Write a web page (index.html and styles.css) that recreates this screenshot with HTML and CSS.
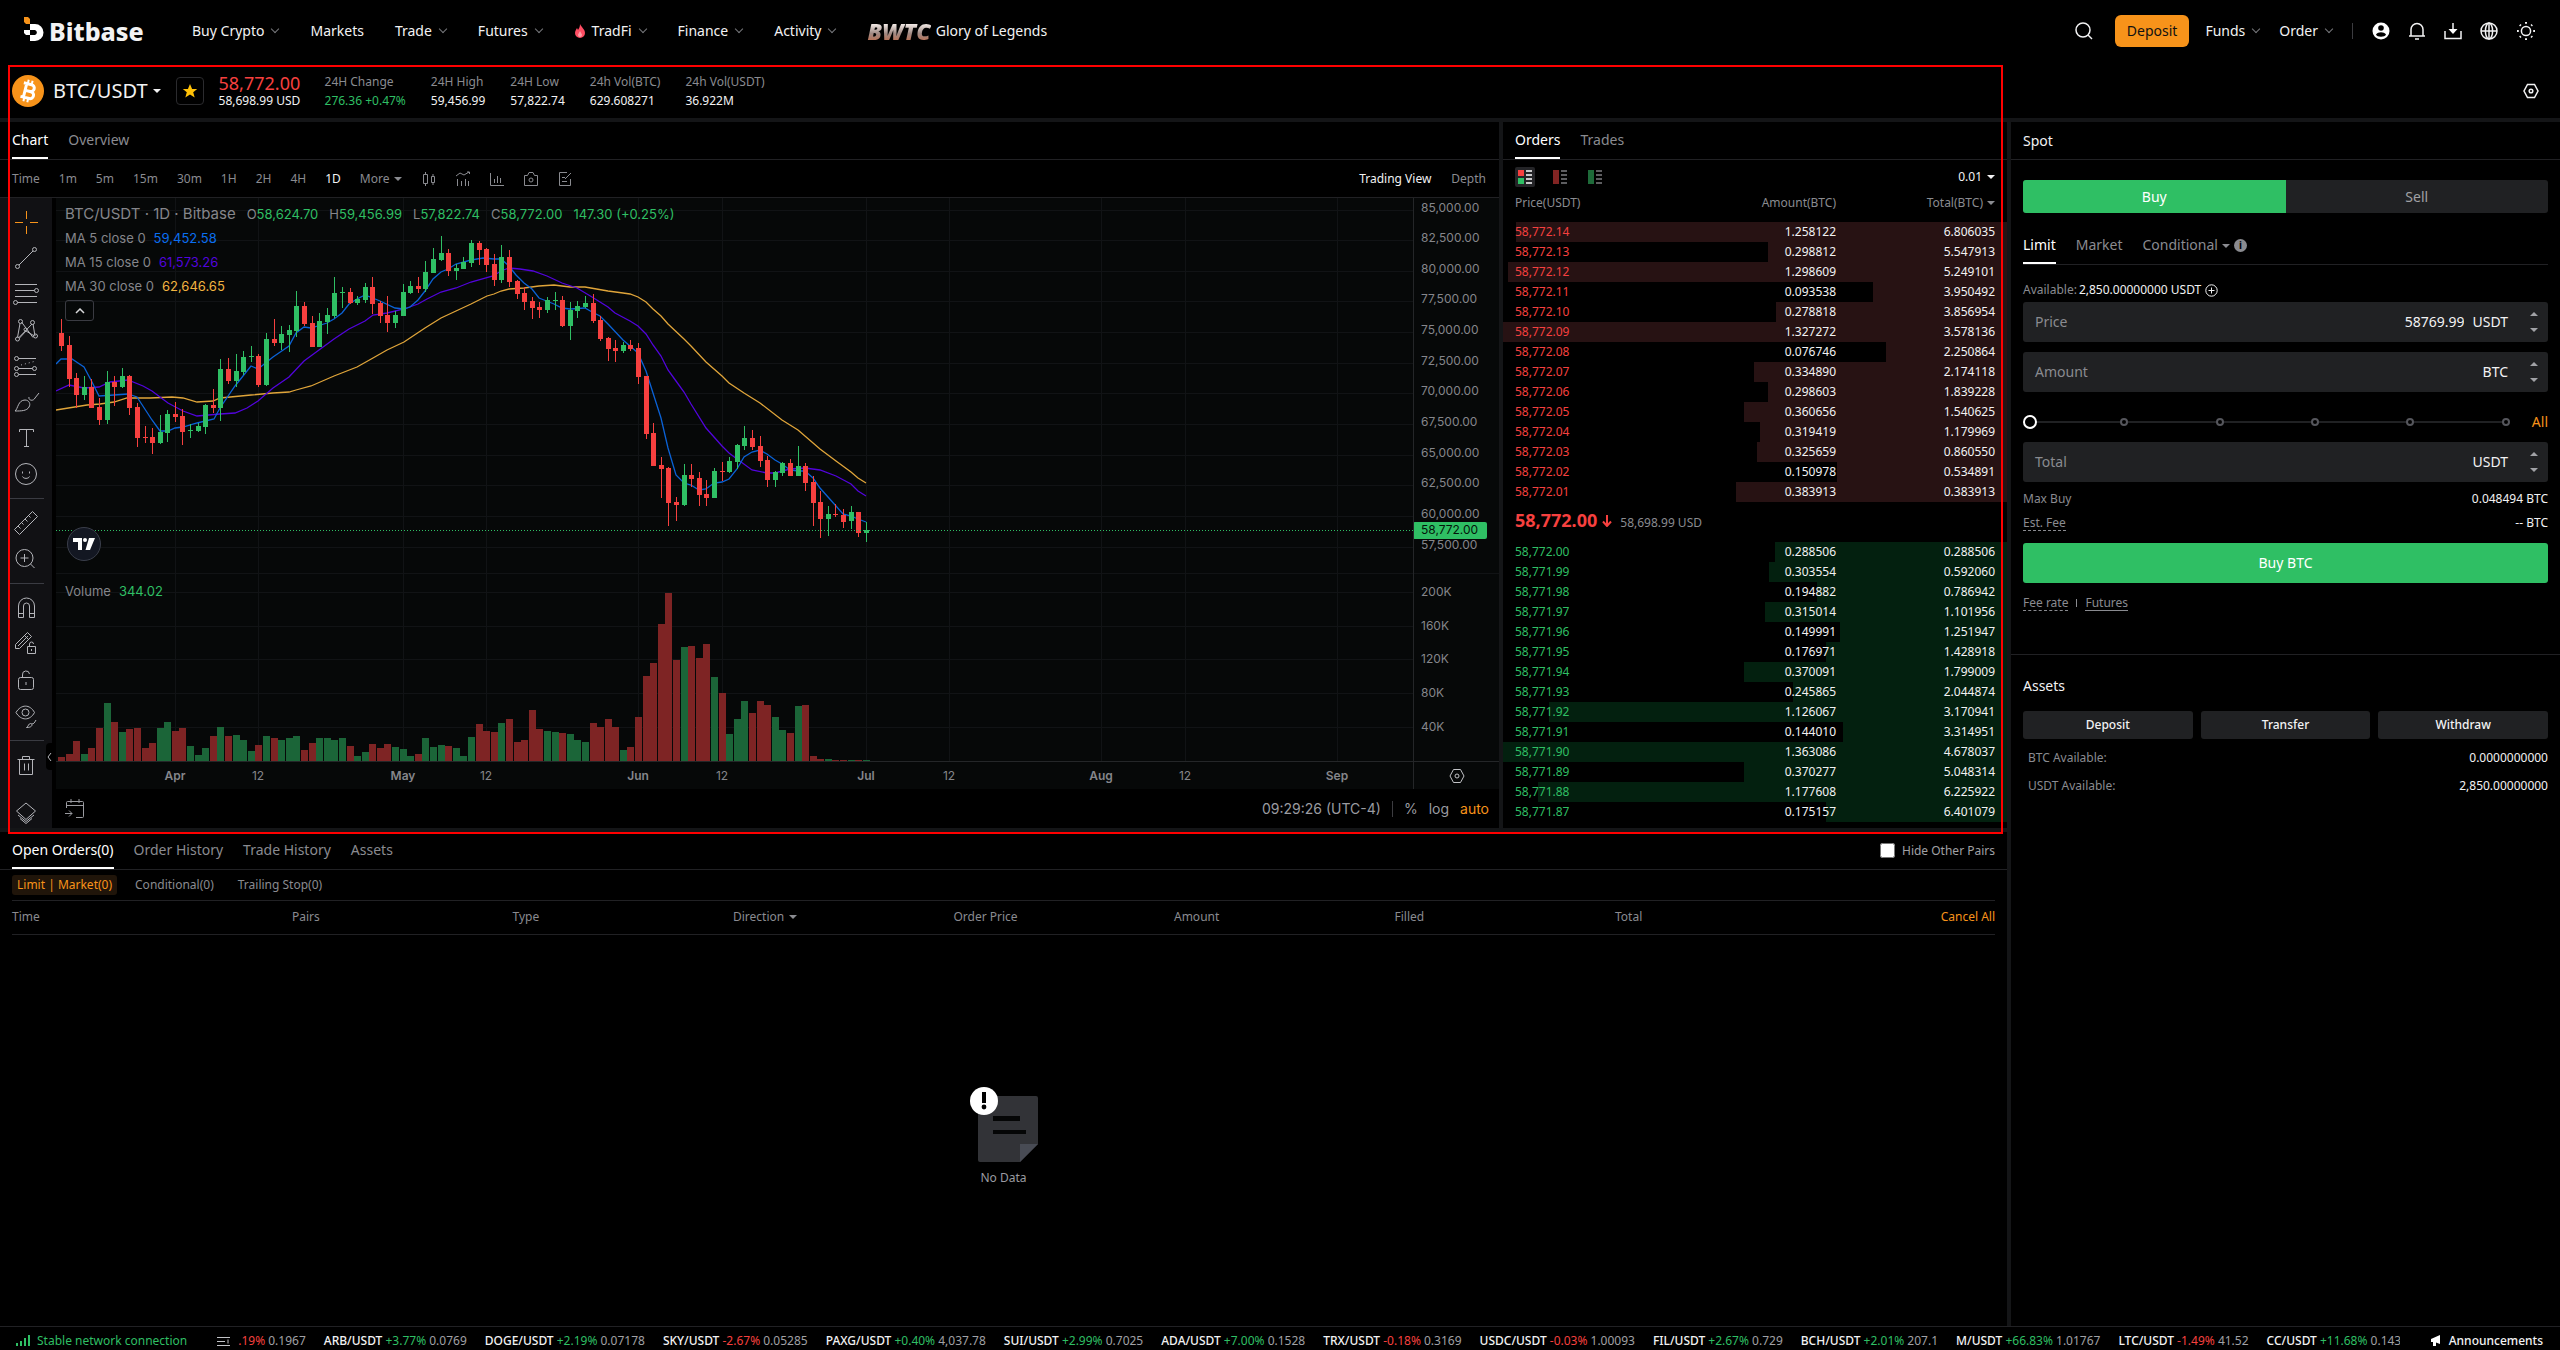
FILE: index.html
```html
<!DOCTYPE html>
<html lang="en">
<head>
<meta charset="utf-8">
<title>BTC/USDT | Bitbase</title>
<link rel="stylesheet" href="styles.css">
</head>
<body>
<header class="topbar">
  <a class="brand" href="#">
    <svg width="20" height="24" viewBox="0 0 20 24"><path d="M0 0h4l2 2v5H2L0 5z" fill="#f7931a"/><path d="M6 7h5a8.500 8.500 0 0 1 0 17H6v-6h5a2.600 2.600 0 0 0 0-5H6z" fill="#fff"/><path d="M0 13h6v5H2l-2-2z" fill="#fff"/></svg>
    <span>Bitbase</span>
  </a>
  <nav class="nav">
    <a href="#">Buy Crypto <i class="chev"></i></a>
    <a href="#">Markets</a>
    <a href="#">Trade <i class="chev"></i></a>
    <a href="#">Futures <i class="chev"></i></a>
    <a href="#"><svg width="12" height="14" viewBox="0 0 12 14"><path d="M6 0c1 3 5 5 5 9a5 5 0 0 1-10 0c0-2 1-3 2-5l1 2c1-2 2-3 2-6z" fill="#ff4d63"/><path d="M6 7c1 2 2 3 2 4a2 2 0 0 1-4 0c0-1 1-2 2-4z" fill="#ff9aa5"/></svg>TradFi <i class="chev"></i></a>
    <a href="#">Finance <i class="chev"></i></a>
    <a href="#">Activity <i class="chev"></i></a>
    <a href="#" class="event"><b class="bwtc">BWTC</b>Glory of Legends</a>
  </nav>
  <div class="tools">
    <button class="icon search" aria-label="Search"><svg width="18" height="18" viewBox="0 0 18 18"><circle cx="8" cy="8" r="7"/><path d="M13 13l4 4"/></svg></button>
    <button class="deposit">Deposit</button>
    <a href="#">Funds <i class="chev"></i></a>
    <a href="#">Order <i class="chev"></i></a>
    <span class="bar"></span>
    <div class="icons">
      <button class="icon" aria-label="Account"><svg width="18" height="18" viewBox="0 0 18 18"><circle cx="9" cy="9" r="8.500" fill="#fff" stroke="none"/><circle cx="9" cy="6" r="2.800" fill="#000" stroke="none"/><path d="M4 12.500c2-3 8-3 10 0-1 3-9 3-10 0z" fill="#000" stroke="none"/></svg></button>
      <button class="icon" aria-label="Notifications"><svg width="18" height="18" viewBox="0 0 18 18"><path d="M3 14V7.500a6 6 0 0 1 12 0V14M1 14h16M7 17h4"/></svg></button>
      <button class="icon" aria-label="Download"><svg width="18" height="18" viewBox="0 0 18 18"><path d="M1 9v7.500h16V9M9 1v7"/><path d="M4.500 7h9L9 12z" fill="#fff" stroke="none"/></svg></button>
      <button class="icon" aria-label="Language"><svg width="18" height="18" viewBox="0 0 18 18"><circle cx="9" cy="9" r="8"/><ellipse cx="9" cy="9" rx="3.600" ry="8"/><path d="M1 9h16M9 1v16"/></svg></button>
      <button class="icon" aria-label="Theme"><svg width="20" height="20" viewBox="0 0 20 20"><circle cx="10" cy="10" r="4.600"/><path d="M10 1v1.800M10 17.200V19M1 10h1.800M17.200 10H19M3.800 3.800l1 1M15.200 15.200l1 1M3.800 16.200l1-1M15.200 4.800l1-1" stroke-width="2"/></svg></button>
    </div>
  </div>
</header>

<section class="pairbar">
  <svg width="32" height="32" viewBox="0 0 32 32"><circle cx="16" cy="16" r="16" fill="#f7931a"/><g transform="rotate(14 16 16)" fill="none" stroke="#fff"><path d="M10 9h8a3.300 3.300 0 0 1 0 7h-5.500M12.500 16H19a3.500 3.500 0 0 1 0 7h-9M13 8.500V23.500" stroke-width="3"/><path d="M14 5v4M18 5v4M14 23v4M18 23v4" stroke-width="2"/></g></svg>
  <button class="pair">BTC/USDT<i class="caret"></i></button>
  <button class="fav" aria-label="Favourite"><svg width="16" height="16" viewBox="0 0 16 16"><path d="M8 1l2.100 5H15.200l-4 3.300 1.500 5.200L8 11.400l-4.700 3.100 1.500-5.200-4-3.300h5.100z" fill="#ffc107"/></svg></button>
  <div class="last"><strong>58,772.00</strong><span>58,698.99 USD</span></div>
  <dl class="stats">
    <div><dt>24H Change</dt><dd class="up">276.36 +0.47%</dd></div>
    <div><dt>24H High</dt><dd>59,456.99</dd></div>
    <div><dt>24H Low</dt><dd>57,822.74</dd></div>
    <div><dt>24h Vol(BTC)</dt><dd>629.608271</dd></div>
    <div><dt>24h Vol(USDT)</dt><dd>36.922M</dd></div>
  </dl>
  <button class="icon settings" aria-label="Settings"><svg width="16" height="16" viewBox="0 0 16 16" stroke-width="1.300"><path d="M4.500 1.500h7L15 8l-3.500 6.500h-7L1 8z"/><circle cx="8" cy="8" r="1.800"/></svg></button>
</section>

<main class="desk">
  <section class="panel chart">
    <div class="tabs"><button class="tab on">Chart</button><button class="tab">Overview</button></div>
    <div class="intervals">
      <span>Time</span><button>1m</button><button>5m</button><button>15m</button><button>30m</button><button>1H</button><button>2H</button><button>4H</button><button class="on">1D</button><button>More<i class="caret"></i></button>
      <div class="charticons">
        <button aria-label="Chart type"><svg width="16" height="16" viewBox="0 0 16 16"><path d="M2.500 3.500h4v9h-4zM4.500 1v2.500M4.500 12.500V15M10.500 5.500h3v6h-3zM12 3v2.500M12 11.500V14"/></svg></button>
        <button aria-label="Indicators"><svg width="16" height="16" viewBox="0 0 16 16"><path d="M1 5l4-3 4 2 5-3M12 1h2.500v2M2.500 8v7M6.500 10v5M10.500 8v7M13.500 10v5"/></svg></button>
        <button aria-label="Statistics"><svg width="16" height="16" viewBox="0 0 16 16"><path d="M1.500 2v12.500H15M5.500 8v4M8.500 5v7M11.500 7v5"/></svg></button>
        <button aria-label="Screenshot"><svg width="16" height="16" viewBox="0 0 16 16"><path d="M1.500 4.500h3l1.500-3h4l1.500 3h3v10h-13z"/><circle cx="8" cy="9" r="2"/></svg></button>
        <button aria-label="Notes"><svg width="16" height="16" viewBox="0 0 16 16"><path d="M10 1.500H2.500v13h11V8M5 6.500h3M5 10.500h5M8 8l6-6"/></svg></button>
      </div>
      <div class="views"><button class="on">Trading View</button><button>Depth</button></div>
    </div>
    <div class="tv">
      <div class="drawbar">
        <button class="on" aria-label="Cross"><svg viewBox="0 0 28 28"><path d="M3 14.500h8M18 14.500h8M14.500 3v8M14.500 18v8"/></svg></button>
        <button aria-label="Trend line"><svg viewBox="0 0 28 28"><path d="M7 21L21 7"/><circle cx="5.500" cy="22.500" r="2"/><circle cx="22.500" cy="5.500" r="2"/></svg></button>
        <button aria-label="Fib retracement"><svg viewBox="0 0 28 28"><path d="M3 4.500h22M3 10.500h19.500M3 16.500h22M5.500 22.500H25"/><circle cx="24.500" cy="10.500" r="2"/><circle cx="3.500" cy="22.500" r="2"/></svg></button>
        <button aria-label="Patterns"><svg viewBox="0 0 28 28"><path d="M5.500 21.500L8 7.500M9.500 6l11.500 15.500M7 21.500L20 8M21 8l2 12M7.500 22L14 15l7.500 4.500"/><circle cx="5.500" cy="23" r="2"/><circle cx="8.500" cy="5.500" r="2"/><circle cx="20.500" cy="6.500" r="2"/><circle cx="23.500" cy="20" r="2"/><circle cx="13.500" cy="13.500" r="1.500"/></svg></button>
        <button aria-label="Prediction"><svg viewBox="0 0 28 28"><path d="M6.500 6.500H24M6.500 16.500h14M6.500 22.500H24"/><path d="M9 13l15-4" stroke-dasharray="1 3"/><circle cx="4.500" cy="6.500" r="2"/><circle cx="4.500" cy="16.500" r="2"/><circle cx="22.500" cy="16.500" r="2"/><circle cx="4.500" cy="22.500" r="2"/></svg></button>
        <button aria-label="Brush"><svg viewBox="0 0 28 28"><path d="M3 23c3-2 3-11 10-11 4 0 6 4 4 7-2 4-8 4-14 4zM17 9c-1 3 4 5 6 1l4-5"/></svg></button>
        <button aria-label="Text"><svg viewBox="0 0 28 28"><path d="M7.500 8V5.500h14V8M14.500 5.500v17M12 22.500h5"/></svg></button>
        <button aria-label="Emoji"><svg viewBox="0 0 28 28"><circle cx="14" cy="14" r="10.500"/><path d="M10.500 11.500v2M17.500 11.500v2M10.500 16.500c1 2.500 6 2.500 7 0"/></svg></button>
        <hr>
        <button aria-label="Measure"><svg viewBox="0 0 28 28"><path d="M2.500 20.500l18-18 5 5-18 18zM6 17l2.500 2.500M9.500 13.500l2 2M13 10l2.500 2.500M16.500 6.500l2 2"/></svg></button>
        <button aria-label="Zoom in"><svg viewBox="0 0 28 28"><circle cx="12.500" cy="13" r="8.500"/><path d="M12.500 9v8M8.500 13h8M18.500 19l4 4"/></svg></button>
        <hr>
        <button aria-label="Magnet"><svg viewBox="0 0 28 28"><path d="M6.500 23.500V12a8 8 0 0 1 16 0v11.500h-5V12a3 3 0 0 0-6 0v11.500zM6.500 19.500h5M17.500 19.500h5"/></svg></button>
        <button aria-label="Stay in drawing mode"><svg viewBox="0 0 28 28"><path d="M3.500 18.500v-4L15.500 2.500l4 4-12 12zM12.500 5.500l4 4M6 16L16 6M15.500 16.500h8v7h-8zM17.500 16.500V14a2 2 0 0 1 4 0M19.500 19v2"/></svg></button>
        <button aria-label="Lock drawings"><svg viewBox="0 0 28 28"><rect x="6.500" y="11.500" width="15" height="12" rx="2"/><path d="M10.500 11.500V9a3.500 3.500 0 0 1 7-1M14 16v3" /></svg></button>
        <button aria-label="Hide drawings"><svg viewBox="0 0 28 28"><path d="M4 10.500c5-8.500 14-8.500 18.500 0-4.500 8.500-13.500 8.500-18.500 0z"/><circle cx="13.500" cy="10.500" r="3.500"/><path d="M14.500 25.500c2-1 2-4 4-4s3 4-4 4zM20 21c0 2 2 1 4-3"/></svg></button>
        <hr>
        <button aria-label="Remove"><svg viewBox="0 0 28 28"><path d="M5.500 8.500h17M10.500 8.500v-3h7v3M7.500 8.500v15h13v-15M12.500 12.500v7M16.500 12.500v7"/></svg></button>
        <button class="layers" aria-label="Object tree"><svg viewBox="0 0 28 28"><path d="M14 4l9.500 8L14 20.500 4.500 12zM6 16l8 6.500 8-6.500M8 19.500l6 5 6-5"/></svg></button>
        <button class="fold" aria-label="Hide toolbar"><svg viewBox="0 0 6 12"><path d="M5 2L2 6l3 4"/></svg></button>
      </div>
      <div class="tvmain">
        <div class="plot">
          <svg class="pane" id="pane" role="img" aria-label="BTC/USDT daily candles"></svg>
          <svg class="axis" id="axis" role="img" aria-label="Price scale"></svg>
          <div class="legend">
            <p class="title"><span>BTC/USDT · 1D · Bitbase</span><small>O<b>58,624.70</b></small><small>H<b>59,456.99</b></small><small>L<b>57,822.74</b></small><small>C<b>58,772.00</b></small><small><b>147.30 (+0.25%)</b></small></p>
            <p>MA 5 close 0<b class="ma5">59,452.58</b></p>
            <p>MA 15 close 0<b class="ma15">61,573.26</b></p>
            <p>MA 30 close 0<b class="ma30">62,646.65</b></p>
            <button aria-label="Collapse legend"><svg width="10" height="6" viewBox="0 0 10 6"><path d="M1 5l4-4 4 4"/></svg></button>
          </div>
          <a class="tvlogo" href="#" aria-label="TradingView"><svg width="22" height="12" viewBox="0 0 22 12"><path d="M0 0h9v12H5V4H0zM16 0h6l-5 12h-4.500z"/><circle cx="12" cy="2" r="2"/></svg></a>
          <p class="legend vol">Volume<b>344.02</b></p>
        </div>
        <div class="times">
          <svg id="times" role="img" aria-label="Time scale"></svg>
          <button aria-label="Scale settings"><svg width="16" height="16" viewBox="0 0 16 16"><path d="M4.500 1.500h7L15 8l-3.500 6.500h-7L1 8z"/><circle cx="8" cy="8" r="2"/></svg></button>
        </div>
        <div class="tvfoot">
          <button aria-label="Go to date"><svg width="20" height="20" viewBox="0 0 20 20"><path d="M1.500 9V3.500a1 1 0 0 1 1-1h15a1 1 0 0 1 1 1v14a1 1 0 0 1-1 1H11M1.500 6.500h17M6 0v4M14 0v4M0 14.500h7M4 11.500l3 3-3 3"/></svg></button>
          <span class="clock">09:29:26 (UTC-4)</span><span class="bar"></span>
          <button>%</button><button>log</button><button class="on">auto</button>
        </div>
      </div>
    </div>
  </section>

  <section class="panel book">
    <div class="tabs"><button class="tab on">Orders</button><button class="tab">Trades</button></div>
    <div class="modes">
      <button class="on" aria-label="Both sides"><svg width="14" height="14" viewBox="0 0 14 14"><path d="M0 0h6v6H0z" fill="#f6403f"/><path d="M0 8h6v6H0z" fill="#2fbf64"/><path d="M8 1h6M8 5h6M8 9h6M8 13h6" stroke="#c8c8ca" stroke-width="2"/></svg></button>
      <button aria-label="Asks only"><svg width="14" height="14" viewBox="0 0 14 14"><path d="M0 0h6v14H0z" fill="#822423"/><path d="M8 1h6M8 5h6M8 9h6M8 13h6" stroke="#5d5d60" stroke-width="2"/></svg></button>
      <button aria-label="Bids only"><svg width="14" height="14" viewBox="0 0 14 14"><path d="M0 0h6v14H0z" fill="#1e6a39"/><path d="M8 1h6M8 5h6M8 9h6M8 13h6" stroke="#5d5d60" stroke-width="2"/></svg></button>
      <button class="step">0.01<i class="caret"></i></button>
    </div>
    <table class="depth">
      <thead><tr><th>Price(USDT)</th><th>Amount(BTC)</th><th>Total(BTC)<i class="caret"></i></th></tr></thead>
      <tbody class="asks" id="asks"></tbody>
      <tbody><tr class="mid"><td colspan="3"><strong>58,772.00</strong><svg width="10" height="12" viewBox="0 0 10 12"><path d="M5 0v11M1 6.500L5 11l4-4.500"/></svg><span>58,698.99 USD</span></td></tr></tbody>
      <tbody class="bids" id="bids"></tbody>
    </table>
  </section>

  <aside class="panel trade">
    <h2 class="head">Spot</h2>
    <form class="ticket">
      <div class="sides"><button type="button" class="on">Buy</button><button type="button">Sell</button></div>
      <div class="kinds"><button type="button" class="on">Limit</button><button type="button">Market</button><button type="button">Conditional<i class="caret"></i><i class="info">i</i></button></div>
      <p class="avail">Available: <b>2,850.00000000 USDT</b><svg width="13" height="13" viewBox="0 0 13 13"><circle cx="6.500" cy="6.500" r="5.700"/><path d="M6.500 3.500v6M3.500 6.500h6"/></svg></p>
      <div class="field"><label for="price">Price</label><input id="price" value="58769.99"><span>USDT</span><i class="spin"></i></div>
      <div class="field"><label for="amount">Amount</label><input id="amount"><span>BTC</span><i class="spin"></i></div>
      <div class="slide"><div class="rail"><i></i><i></i><i></i><i></i><i></i><i></i><input type="range" min="0" max="100" value="0" aria-label="Share of balance"></div><button type="button">All</button></div>
      <div class="field"><label for="total">Total</label><input id="total"><span>USDT</span><i class="spin"></i></div>
      <p class="line"><span>Max Buy</span><b>0.048494 BTC</b></p>
      <p class="line"><span class="hint">Est. Fee</span><b>-- BTC</b></p>
      <button type="button" class="buy">Buy BTC</button>
      <p class="links"><a href="#" class="hint">Fee rate</a><i></i><a href="#" class="solid">Futures</a></p>
    </form>
    <section class="wallet">
      <h2>Assets</h2>
      <div class="moves"><button>Deposit</button><button>Transfer</button><button>Withdraw</button></div>
      <p><span>BTC Available:</span><b>0.0000000000</b></p>
      <p><span>USDT Available:</span><b>2,850.00000000</b></p>
    </section>
  </aside>

  <section class="panel orders">
    <div class="tabs"><button class="tab on">Open Orders(0)</button><button class="tab">Order History</button><button class="tab">Trade History</button><button class="tab">Assets</button>
      <label class="hide"><input type="checkbox">Hide Other Pairs</label></div>
    <div class="filters"><button class="on">Limit | Market(0)</button><button>Conditional(0)</button><button>Trailing Stop(0)</button></div>
    <table class="open">
      <thead><tr><th class="wide">Time</th><th>Pairs</th><th>Type</th><th>Direction<i class="caret"></i></th><th>Order Price</th><th>Amount</th><th>Filled</th><th>Total</th><th class="cancel"><button>Cancel All</button></th></tr></thead>
    </table>
    <div class="empty">
      <svg width="68" height="76" viewBox="0 0 68 76"><path d="M10 9h56a2 2 0 0 1 2 2v46L50 75H10a2 2 0 0 1-2-2V11a2 2 0 0 1 2-2z" fill="#323337"/><path d="M50 57h18L50 75z" fill="#484b54"/><path d="M23 29h27v5H23zM23 43h33v4H23z" fill="#050606"/><circle cx="14" cy="14" r="14" fill="#fff"/><path d="M12 5h4v11h-4z" fill="#000"/><circle cx="14" cy="20" r="2.400" fill="#000"/></svg>
      <p>No Data</p>
    </div>
  </section>
</main>

<footer class="foot">
  <span class="net"><svg width="14" height="11" viewBox="0 0 14 11"><path d="M1 8v3M5 6v5M9 3v8M13 0v11" stroke="#2fbf64" stroke-width="2"/></svg>Stable network connection</span>
  <svg class="menu" width="13" height="10" viewBox="0 0 13 10"><path d="M0 1.500h13M0 5.500h8M0 9.500h13M11 3.500v4"/></svg>
  <div class="tape" id="tape"></div>
  <a class="news" href="#"><svg width="14" height="13" viewBox="0 0 14 13"><path d="M1 5l9-4v9L6 8.500V12H3V8H1zM11.500 4.500h2M11.500 2.500l1.500-1M11.500 7l1.500 1" fill="#fff" stroke="#fff"/></svg>Announcements</a>
</footer>
<div class="highlight"></div>
<script src="app.js"></script>
</body>
</html>
```
FILE: styles.css
```css
* { box-sizing: border-box; margin: 0; padding: 0; }
:root {
  --line: #212124;
  --gap: #141517;
  --muted: #8a8b90;
  --soft: #202123;
  --green: #2fbf64;
  --red: #f6403f;
  --orange: #f7931a;
}
body {
  position: relative;
  display: flex;
  flex-direction: column;
  min-height: 100vh;
  background: #000;
  color: #f2f2f3;
  font: 12px/16px "Noto Sans", sans-serif;
}
button, input { font: inherit; color: inherit; background: none; border: 0; }
a { color: inherit; text-decoration: none; }
i { font-style: normal; }
svg { display: block; flex: none; fill: none; stroke: currentColor; }
svg path[fill], svg circle[fill] { stroke: none; }
p, .tab, h2, button { white-space: nowrap; }
.caret { display: inline-block; border: 4px solid transparent; border-top-color: currentColor; border-bottom: 0; margin-left: 5px; vertical-align: 2px; }
.chev { width: 6px; height: 6px; border: solid #77787c; border-width: 0 1px 1px 0; transform: rotate(45deg); margin: -4px 1px 0 2px; }
.icon svg { stroke-width: 1.500; }

/* top navigation */
.topbar { display: flex; align-items: center; height: 62px; padding: 0 24px; font-size: 14px; }
.brand { display: flex; align-items: center; gap: 5px; width: 168px; font: 800 25px/32px "Noto Sans", sans-serif; }
.brand svg { stroke: none; margin-top: -4px; }
.nav, .nav a, .tools, .tools a, .icons { display: flex; align-items: center; }
.nav { gap: 31px; }
.nav a, .tools a { gap: 6px; white-space: nowrap; }
.nav svg { stroke: none; }
.nav .event { gap: 5px; }
.bwtc { font: italic 800 23px/24px "Open Sans", sans-serif; background: linear-gradient(#f4ece8 20%, #a08a84 60%, #c06a48); background-clip: text; color: transparent; }
.tools { margin-left: auto; gap: 19px; }
.search { margin-right: 3px; }
.deposit { height: 32px; padding: 0 12px; border-radius: 6px; background: var(--orange); color: #111; margin-right: -3px; }
.tools .bar, .tvfoot .bar { width: 1px; height: 16px; background: #3c3c40; }
.icons { gap: 18px; }

/* pair summary */
.pairbar { display: flex; align-items: center; height: 60px; padding: 2px 21px 0 12px; border-bottom: 4px solid var(--gap); }
.pair { font-size: 20px; line-height: 28px; margin-left: 9px; display: flex; align-items: center; }
.fav { display: grid; place-items: center; width: 28px; height: 28px; margin: 0 15px; border: 1px solid #2b2b2e; border-radius: 4px; }
.last { display: flex; flex-direction: column; width: 81px; margin-right: 25px; white-space: nowrap; }
.last strong { font-size: 18px; line-height: 20px; font-weight: 400; color: var(--red); }
.stats { display: flex; gap: 25px; }
.stats dt { color: var(--muted); line-height: 20px; }
.stats dd { line-height: 18px; }
.up { color: var(--green); }
.settings { margin-left: auto; }

/* desk grid */
.desk { flex: 1; display: grid; grid-template-columns: minmax(0, 1fr) 504px 549px; grid-template-rows: auto 1fr; gap: 4px; background: var(--gap); }
.panel { background: #000; min-width: 0; }
.trade { grid-column: 3; grid-row: 1 / 3; }
.orders { grid-column: 1 / 3; grid-row: 2; display: flex; flex-direction: column; }
.tabs, .head { display: flex; height: 38px; padding: 0 12px; gap: 20px; border-bottom: 1px solid var(--line); font-size: 14px; }
.tab { color: var(--muted); border-bottom: 2px solid transparent; }
.tab.on { color: #fff; border-color: #fff; }
.head { align-items: center; font-weight: 400; }

/* chart */
.intervals { display: flex; align-items: center; gap: 19px; height: 38px; padding: 0 13px 0 12px; border-bottom: 1px solid var(--line); color: var(--muted); }
.intervals .on { color: #f2f2f3; }
.charticons, .views { display: flex; gap: 18px; }
.views { margin-left: auto; gap: 20px; }
.tv { display: flex; gap: 4px; height: 630px; }
.drawbar { position: relative; width: 52px; padding-top: 6px; background: #111114; display: flex; flex-direction: column; color: #b4b5ba; }
.drawbar button { height: 36px; display: grid; place-items: center; flex: none; }
.drawbar svg { width: 28px; height: 28px; }
.drawbar .on { color: var(--orange); }
.drawbar hr { border: 0; height: 1px; margin: 6px 8px 6px 10px; background: #3a3b42; flex: none; }
.drawbar .layers { height: 30px; margin-top: auto; }
.drawbar .fold { position: absolute; right: 0; top: 545px; width: 6px; height: 27px; background: #000; border-radius: 4px 0 0 4px; }
.drawbar .fold svg { width: 6px; height: 12px; }
.tvmain { flex: 1; min-width: 0; font-family: Inter, sans-serif; color: #85868b; }
.plot { position: relative; display: flex; height: 564px; background: #060808; border-bottom: 1px solid #242628; }
.pane { flex: 1; min-width: 0; height: 563px; stroke: none; }
.axis { width: 86px; height: 563px; border-left: 1px solid #242628; stroke: none; font-size: 12px; }
.legend { position: absolute; left: 9px; top: 4px; font-size: 13px; line-height: 24px; }
.legend b { font-weight: 400; color: var(--green); margin-left: 8px; }
.legend .title { font-size: 15px; display: flex; gap: 11px; }
.legend small { font-size: 13px; }
.legend small b { margin-left: 0; }
.legend .ma5 { color: #0b6ff0; }
.legend .ma15 { color: #5204dc; }
.legend .ma30 { color: #f2b440; }
.legend button { display: grid; place-items: center; width: 29px; height: 21px; margin-top: 2px; border: 1px solid #3a3b42; border-radius: 3px; color: #d8d8da; }
.legend svg { stroke-width: 1.500; }
.legend.vol { top: 381px; }
.tvlogo { position: absolute; left: 11px; top: 329px; width: 34px; height: 34px; display: grid; place-items: center; border: 1px solid #3a3e4a; border-radius: 50%; background: #131722; }
.tvlogo svg { fill: #fff; stroke: none; }
.times { display: flex; height: 27px; background: #060808; }
.times > svg { flex: 1; min-width: 0; height: 27px; stroke: none; font-size: 12px; }
.times button { width: 86px; display: grid; place-items: center; border-left: 1px solid #242628; color: #c2c3c7; }
.tvfoot { display: flex; align-items: center; gap: 11px; height: 39px; padding: 0 10px 0 9px; font-size: 14px; color: #9a9ba0; }
.clock { margin-left: auto; }
.tvfoot .on { color: var(--orange); }
.grid { stroke: #111315; }
.red { fill: var(--red); }
.green { fill: var(--green); }
.vr { fill: #7e2424; }
.vg { fill: #1b6538; }
.tick { fill: #85868b; }
.month { font-weight: 600; }

/* order book */
.modes { display: flex; align-items: center; height: 34px; padding: 0 12px; gap: 15px; }
.modes button { display: grid; place-items: center; width: 20px; height: 20px; border-radius: 2px; }
.modes .on { background: #242427; }
.modes svg { stroke: none; }
.modes svg path[stroke] { stroke: #5d5d60; }
.modes .on path[stroke] { stroke: #c8c8ca; }
.modes .step { display: block; width: auto; margin-left: auto; }
.depth { width: 100%; border-collapse: collapse; table-layout: fixed; }
.depth th { font-weight: 400; color: var(--muted); height: 28px; text-align: right; padding-bottom: 10px; line-height: 16px; }
.depth td { height: 20px; line-height: 20px; text-align: right; }
.depth th:first-child, .depth td:first-child { text-align: left; padding-left: 12px; }
.depth th:nth-child(2), .depth td:nth-child(2) { padding-right: 3px; }
.depth th:last-child, .depth td:last-child { padding-right: 12px; }
.depth .caret { margin-left: 4px; }
.asks tr { background: linear-gradient(to left, #271213 var(--w), transparent var(--w)); }
.bids tr { background: linear-gradient(to left, #03200f var(--w), transparent var(--w)); }
.asks td:first-child { color: var(--red); }
.bids td:first-child { color: var(--green); }
.depth .mid td { height: 40px; padding-bottom: 2px; }
.mid strong { font-size: 18px; font-weight: 700; color: var(--red); }
.mid svg { display: inline-block; color: var(--red); stroke-width: 2; margin: 0 8px 0 5px; }
.mid span { color: var(--muted); }

/* trade ticket */
.ticket { padding: 20px 12px 0; height: 495px; border-bottom: 1px solid var(--line); }
.sides { display: grid; grid-template-columns: 1fr 1fr; height: 33px; border-radius: 3px; overflow: hidden; background: var(--soft); color: #a0a1a5; font-size: 14px; }
.sides .on { background: var(--green); color: #fff; }
.kinds { display: flex; gap: 20px; height: 38px; margin-top: 14px; border-bottom: 1px solid var(--line); color: var(--muted); font-size: 14px; }
.kinds button { border-bottom: 2px solid transparent; }
.kinds .caret { margin-left: 4px; }
.kinds .on { color: #fff; border-color: #fff; }
.info { display: inline-block; width: 13px; height: 13px; margin-left: 4px; border-radius: 50%; background: #8a8b90; color: #000; font: 700 10px/13px "Noto Sans", sans-serif; vertical-align: 1px; }
.avail { display: flex; gap: 2px; margin: 17px 0 4px; color: var(--muted); line-height: 16px; align-items: center; }
.avail b { font-weight: 400; color: #f2f2f3; }
.avail svg { color: #f2f2f3; margin-left: 2px; }
.field { display: flex; align-items: center; height: 40px; margin-bottom: 10px; padding: 0 10px 0 12px; border-radius: 3px; background: var(--soft); font-size: 14px; }
.field label { color: var(--muted); }
.field input { flex: 1; min-width: 0; text-align: right; padding-right: 8px; outline: 0; }
.spin { position: relative; width: 8px; height: 20px; margin-left: 22px; }
.spin::before, .spin::after { content: ""; position: absolute; left: 0; border: 4px solid transparent; }
.spin::before { top: 0; border-top: 0; border-bottom-color: #a0a1a5; }
.spin::after { bottom: 0; border-bottom: 0; border-top-color: #a0a1a5; }
.slide { display: flex; align-items: center; gap: 22px; height: 40px; font-size: 14px; }
.slide button { color: var(--orange); margin-left: auto; }
.rail { position: relative; flex: 1; display: flex; justify-content: space-between; align-items: center; height: 16px; padding-left: 2px; background: linear-gradient(#202123, #202123) center / 100% 2px no-repeat; }
.rail i { width: 8px; height: 8px; border: 2px solid #55565c; border-radius: 50%; background: #000; }
.rail input { position: absolute; inset: 0; width: 100%; appearance: none; }
.rail input::-webkit-slider-thumb { appearance: none; width: 14px; height: 14px; border: 2px solid #fff; border-radius: 50%; background: #000; }
.line, .wallet p { display: flex; justify-content: space-between; height: 24px; align-items: center; color: var(--muted); }
.field + .line { margin-top: -5px; }
.line b, .wallet p b { font-weight: 400; color: #f2f2f3; }
.hint { line-height: 15px; border-bottom: 1px dashed #8a8b90; }
.solid { line-height: 15px; border-bottom: 1px solid #8a8b90; }
.buy { width: 100%; height: 40px; margin-top: 8px; border-radius: 3px; background: var(--green); font-size: 14px; color: #fff; }
.links { display: flex; gap: 8px; align-items: center; height: 40px; color: var(--muted); }
.links i { width: 1px; height: 8px; background: #8a8b90; }
.wallet { padding: 19px 12px; }
.wallet h2 { font-size: 14px; line-height: 24px; font-weight: 400; }
.moves { display: grid; grid-template-columns: repeat(3, 1fr); gap: 8px; margin: 13px 0 5px; }
.moves button { height: 28px; border-radius: 3px; background: var(--soft); font-weight: 500; }
.wallet p { height: 28px; padding-left: 5px; }

/* open orders */
.hide { display: flex; align-items: center; gap: 7px; margin-left: auto; font-size: 12px; color: #a0a1a5; }
.hide input { width: 15px; height: 15px; }
.filters { display: flex; align-items: center; height: 31px; gap: 12px; margin: 0 12px; border-bottom: 1px solid var(--line); color: var(--muted); }
.filters button { height: 20px; padding: 0 6px; border-radius: 3px; }
.filters .on { padding: 0 5px; background: #20150a; color: var(--orange); }
.open { margin: 0 12px; border-collapse: collapse; table-layout: fixed; }
.open th { height: 33px; text-align: left; font-weight: 400; color: var(--muted); border-bottom: 1px solid var(--line); width: 11.120%; }
.open .wide { width: 14.120%; }
.open .cancel { width: auto; text-align: right; color: var(--orange); }
.empty { flex: 1; display: flex; flex-direction: column; align-items: center; justify-content: center; gap: 7px; padding-top: 12px; color: #9a9ba0; }

/* status bar */
.foot { display: flex; align-items: center; height: 24px; padding: 4px 17px 0 16px; border-top: 1px solid var(--line); }
.net { display: flex; align-items: center; gap: 7px; color: var(--green); white-space: nowrap; }
.menu { margin: 0 8px 0 30px; color: #c2c3c7; }
.tape { flex: 1; min-width: 0; display: flex; gap: 18px; overflow: hidden; white-space: nowrap; color: #a0a1a5; margin-right: 30px; }
.tape b { font-weight: 500; color: #f2f2f3; }
.tape em { font-style: normal; color: var(--green); }
.tape em.down { color: var(--red); }
.news { display: flex; gap: 5px; align-items: center; font-weight: 500; }

.highlight { position: absolute; left: 8px; right: 557px; top: 65px; height: 769px; border: 2px solid #f00; pointer-events: none; }
```
FILE: app.js
```js
// One entry per day from Mar 17: direction, high, body top, body bottom, low, volume (pane units)
const days = `R 121 135 148 153 4|R 138 147 181 189 7|R 175 180 197 210 20|G 178 189 197 202 7|R 181 189 210 210 13|R 200 209 222 227 33|G 173 184 222 226 58|R 178 184 189 208 39|G 170 178 189 190 29|R 177 178 210 217 32|R 205 209 240 249 33|R 228 239 240 245 13|R 230 239 245 256 18|G 217 234 245 246 33|G 212 216 235 244 39|R 204 216 219 224 30|R 211 218 234 247 33|G 226 232 233 240 15|G 225 228 233 234 6|G 206 207 229 236 13|R 191 207 210 215 25|G 161 171 210 223 34|R 160 171 183 186 25|G 156 173 183 189 26|G 153 159 174 177 21|G 148 158 159 164 10|R 156 158 187 189 16|G 135 141 187 188 25|R 121 141 145 148 23|G 128 136 145 152 21|G 127 132 137 154 23|G 93 108 133 139 25|R 104 108 126 128 11|R 118 125 149 149 18|G 115 123 149 149 23|G 110 117 124 136 23|G 79 95 118 120 21|G 89 94 95 110 23|R 90 94 105 106 15|G 98 101 105 107 5|G 85 89 102 105 9|R 79 89 106 116 17|R 103 105 118 125 13|R 98 117 125 134 17|G 113 117 125 130 14|G 86 94 118 118 12|G 83 88 95 96 5|R 79 88 91 95 7|G 63 74 91 94 23|G 50 61 75 75 14|G 38 55 62 63 16|R 51 55 73 78 15|G 66 70 73 82 13|G 59 64 71 71 5|G 42 45 65 69 24|R 43 45 52 67 37|R 50 51 67 74 30|R 56 66 82 88 29|G 47 59 82 85 38|R 52 59 84 89 42|R 82 83 96 101 19|R 89 95 104 112 21|R 99 103 110 121 51|R 104 109 112 120 32|G 99 102 112 115 30|G 94 102 103 112 29|R 98 102 128 129 28|G 104 112 128 142 27|G 103 108 113 120 21|G 98 105 109 110 19|R 96 105 123 125 38|R 118 122 141 143 34|R 139 140 151 163 42|R 142 150 153 164 34|G 144 147 153 155 11|R 142 147 151 153 14|R 145 150 179 186 44|R 178 178 236 241 85|R 225 235 268 268 98|R 259 267 271 300 137|R 269 270 305 328 168|R 299 304 307 323 101|G 266 277 307 308 114|R 266 277 281 289 115|R 274 280 297 308 103|R 282 296 300 308 117|G 270 273 300 300 84|R 264 273 274 283 68|G 259 263 274 275 27|G 246 247 264 271 42|G 228 240 248 252 60|R 232 240 249 252 48|R 238 248 263 269 60|R 258 262 282 289 56|G 273 274 282 289 44|G 264 265 275 278 31|R 261 265 278 278 28|G 248 268 278 278 55|R 265 268 285 293 56|R 278 284 305 328 5|R 293 304 321 340 2|G 308 316 321 338 2|R 306 316 317 319 1|R 311 317 324 330 1|G 308 314 323 331 1|R 314 314 335 339 1|G 324 332 335 344 1`.split('|').map(s => s.split(' '));

const averages = {
  '#e0a53a': '0,212 31,207 44,206 58,204 71,200 94,200 116,199 127,200 141,204 157,203 164,200 195,197 217,195 233,194 240,192 255,188 278,178 301,169 317,160 331,152 348,144 369,130 385,120 400,113 415,106 431,98 438,96 445,93 453,91 468,90 483,88 498,87 514,89 529,89 552,93 567,95 574,96 582,99 590,104 597,111 605,118 612,126 628,141 635,148 650,164 666,178 673,185 688,195 704,205 726,222 742,232 764,251 780,263 795,274 802,280 810,285',
  '#5204dc': '0,193 13,187 28,190 43,189 54,184 72,182 87,188 96,193 112,205 127,213 141,218 164,216 179,215 191,210 202,203 217,190 233,179 248,163 263,152 278,141 293,131 309,123 317,117 331,115 348,111 362,106 371,101 385,94 400,90 415,84 437,78 445,73 453,70 464,71 477,73 491,78 506,85 521,90 536,99 552,109 559,115 574,123 582,128 590,136 597,147 605,158 612,172 620,183 628,194 635,206 650,230 666,248 673,255 681,261 696,272 711,275 719,275 734,271 749,270 764,272 780,278 795,286 802,293 810,298',
  '#0b62d6': '0,166 5,161 16,161 22,165 28,169 36,184 43,198 58,197 72,196 81,199 96,222 104,233 112,233 119,230 127,229 141,225 158,221 164,210 179,188 195,168 202,171 217,159 233,148 240,135 248,129 255,130 271,125 278,121 286,115 293,106 301,101 309,97 324,103 339,110 348,111 354,109 362,102 369,93 377,81 385,74 392,71 400,66 415,62 427,60 438,61 445,61 453,68 460,77 468,85 476,91 483,100 498,106 506,110 514,111 529,110 536,114 544,118 552,126 567,142 574,148 582,155 590,173 597,195 605,220 612,250 620,277 628,285 635,287 643,292 650,291 658,285 666,284 673,281 681,271 688,259 696,254 704,252 711,256 719,262 726,266 734,272 742,273 749,273 757,280 764,290 772,299 780,308 787,316 795,318 802,321 810,324'
};

const step = 7.593, base = 563;
const xOf = day => Math.round(5 + step * day);
const yOf = price => Math.round(11.5 + (85000 - price) / 2500 * 30.66);
const months = [['Apr', 15], ['12', 26], ['May', 45], ['12', 56], ['Jun', 76], ['12', 87], ['Jul', 106], ['12', 117], ['Aug', 137], ['12', 148], ['Sep', 168]];

let grid = '', bars = '', labels = '';
for (let p = 85000; p >= 57500; p -= 2500) {
  grid += `<path class="grid" d="M0 ${yOf(p)}.5h4000"/>`;
  labels += `<text class="tick" x="7" y="${yOf(p) + 2}">${p.toLocaleString('en-US')}.00</text>`;
}
[200, 160, 120, 80, 40].forEach((v, i) => {
  const y = Math.round(394 + i * 33.7);
  grid += `<path class="grid" d="M0 ${y}.5h4000"/>`;
  labels += `<text class="tick" x="7" y="${y + 4}">${v}K</text>`;
});
grid += '<path class="grid" d="M0 375.5h4000"/>';
let times = '';
for (const [name, day] of months) {
  grid += `<path class="grid" d="M${xOf(day)}.5 0v563"/>`;
  times += `<text class="tick ${name === '12' ? '' : 'month'}" text-anchor="middle" x="${xOf(day)}" y="18">${name}</text>`;
}
days.forEach(([dir, high, top, bottom, low, vol], day) => {
  const x = xOf(day), up = dir === 'G';
  bars += `<rect class="${up ? 'vg' : 'vr'}" x="${x - 3}" y="${base - vol}" width="7" height="${vol}"/>`;
  bars += `<rect class="${up ? 'green' : 'red'}" x="${x}" y="${high}" width="1" height="${low - high}"/>`;
  bars += `<rect class="${up ? 'green' : 'red'}" x="${x - 2}" y="${top}" width="5" height="${bottom - top}"/>`;
});
const lines = Object.entries(averages).map(([c, pts]) => `<polyline points="${pts}" fill="none" stroke="${c}" stroke-width="1.3"/>`).join('');
document.getElementById('pane').innerHTML = grid + lines + bars +
  '<path d="M0 332.5h4000" stroke="#2fbf64" stroke-dasharray="1 2"/>';
document.getElementById('axis').innerHTML = '<path class="grid" d="M0 375.5h86"/>' + labels +
  '<rect class="green" x="-1" y="324" width="74" height="17" rx="2"/><text x="7" y="336" fill="#04140a">58,772.00</text>';
document.getElementById('times').innerHTML = times;

// price, amount, total, depth width in percent
const book = {
  asks: `58,772.14 1.258122 6.806035 97.4|58,772.13 0.298812 5.547913 47.4|58,772.12 1.298609 5.249101 99|58,772.11 0.093538 3.950492 26.6|58,772.10 0.278818 3.856954 45.8|58,772.09 1.327272 3.578136 100|58,772.08 0.076746 2.250864 24|58,772.07 0.334890 2.174118 50.2|58,772.06 0.298603 1.839228 47.4|58,772.05 0.360656 1.540625 52.2|58,772.04 0.319419 1.179969 49|58,772.03 0.325659 0.860550 49.6|58,772.02 0.150978 0.534891 33.7|58,772.01 0.383913 0.383913 53.8`,
  bids: `58,772.00 0.288506 0.288506 46|58,771.99 0.303554 0.592060 47.2|58,771.98 0.194882 0.786942 37.7|58,771.97 0.315014 1.101956 48|58,771.96 0.149991 1.251947 33.1|58,771.95 0.176971 1.428918 35.9|58,771.94 0.370091 1.799009 52.2|58,771.93 0.245865 2.044874 42.5|58,771.92 1.126067 3.170941 90.9|58,771.91 0.144010 3.314951 32.5|58,771.90 1.363086 4.678037 100|58,771.89 0.370277 5.048314 52.2|58,771.88 1.177608 6.225922 93|58,771.87 0.175157 6.401079 35.9`
};
for (const side in book) {
  document.getElementById(side).innerHTML = book[side].split('|').map(r => {
    const [price, amount, total, w] = r.split(' ');
    return `<tr style="--w:${w}%"><td>${price}</td><td>${amount}</td><td>${total}</td></tr>`;
  }).join('');
}

const tape = [['', '.19%', '0.1967', 1], ['ARB/USDT', '+3.77%', '0.0769'], ['DOGE/USDT', '+2.19%', '0.07178'], ['SKY/USDT', '-2.67%', '0.05285', 1], ['PAXG/USDT', '+0.40%', '4,037.78'], ['SUI/USDT', '+2.99%', '0.7025'], ['ADA/USDT', '+7.00%', '0.1528'], ['TRX/USDT', '-0.18%', '0.3169', 1], ['USDC/USDT', '-0.03%', '1.00093', 1], ['FIL/USDT', '+2.67%', '0.729'], ['BCH/USDT', '+2.01%', '207.1'], ['M/USDT', '+66.83%', '1.01767'], ['LTC/USDT', '-1.49%', '41.52', 1], ['CC/USDT', '+11.68%', '0.1437']];
document.getElementById('tape').innerHTML = tape.map(([n, c, p, down]) =>
  `<span>${n ? `<b>${n}</b> ` : ''}<em${down ? ' class="down"' : ''}>${c}</em> ${p}</span>`).join('');
```
